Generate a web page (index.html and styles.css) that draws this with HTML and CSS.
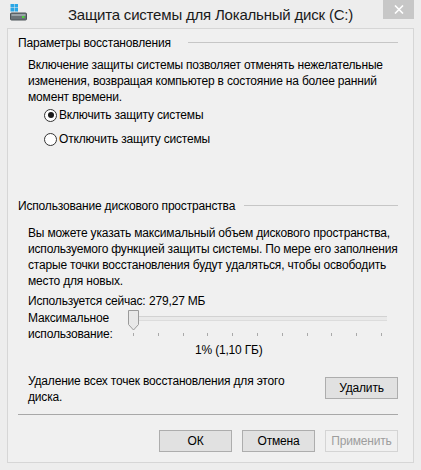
FILE: index.html
```html
<!DOCTYPE html>
<html lang="ru">
<head>
<meta charset="utf-8">
<link rel="stylesheet" href="styles.css">
</head>
<body>
<div class="window">
  <div class="titlebar">
    <div class="tb-left">
      <svg class="app-icon" width="17" height="17" viewBox="0 0 17 17">
        <rect x="0.5" y="0" width="3.5" height="3.5" fill="#2aa6e6"/>
        <rect x="4.5" y="0" width="3.5" height="3.5" fill="#2aa6e6"/>
        <rect x="0.5" y="4" width="3.5" height="3.5" fill="#2aa6e6"/>
        <rect x="4.5" y="4" width="3.5" height="3.5" fill="#2aa6e6"/>
        <rect x="0.5" y="9" width="16" height="7" rx="1" fill="#6a7378" stroke="#4c5458" stroke-width="1"/>
        <rect x="1.5" y="10" width="14" height="2" fill="#9aa3a8"/>
        <rect x="12" y="12" width="2.5" height="2" fill="#4cd23c"/>
      </svg>
    </div>
    <div class="title">Защита системы для Локальный диск (C:)</div>
    <div class="tb-right">
      <div class="close">
        <svg width="10" height="9" viewBox="0 0 10 9"><path d="M1 0.5 L9 8.5 M9 0.5 L1 8.5" stroke="#fff" stroke-width="1.6"/></svg>
      </div>
    </div>
  </div>

  <div class="client">
    <div class="group-head"><span>Параметры восстановления</span><i class="rule"></i></div>
    <p class="desc">Включение защиты системы позволяет отменять нежелательные<br>изменения, возвращая компьютер в состояние на более ранний<br>момент времени.</p>
    <div class="radio radio-first"><span class="circle checked"></span><span>Включить защиту системы</span></div>
    <div class="radio radio-second"><span class="circle"></span><span>Отключить защиту системы</span></div>

    <div class="group-head group-two"><span>Использование дискового пространства</span><i class="rule"></i></div>
    <p class="desc desc-two">Вы можете указать максимальный объем дискового пространства,<br>используемого функцией защиты системы. По мере его заполнения<br>старые точки восстановления будут удаляться, чтобы освободить<br>место для новых.</p>
    <div class="usage"><span class="usage-label">Используется сейчас:</span><span>279,27 МБ</span></div>

    <div class="max-row">
      <div class="max-label">Максимальное<br>использование:</div>
      <div class="slider">
        <div class="track"></div>
        <div class="ticks">
          <i></i><i></i><i></i><i></i><i></i><i></i><i></i><i></i><i></i><i></i><i></i>
        </div>
        <svg class="thumb" width="11" height="21" viewBox="0 0 11 21">
          <path d="M0.5 0.5 H10.5 V14.5 L5.5 20 L0.5 14.5 Z" fill="#e8e8e8" stroke="#9a9a9a" stroke-width="1"/>
        </svg>
      </div>
    </div>
    <div class="percent">1% (1,10 ГБ)</div>

    <div class="delete-row">
      <p class="delete-text">Удаление всех точек восстановления для этого<br>диска.</p>
      <button class="btn btn-delete">Удалить</button>
    </div>

    <div class="separator"></div>

    <div class="buttons">
      <button class="btn">ОК</button>
      <button class="btn">Отмена</button>
      <button class="btn disabled">Применить</button>
    </div>
  </div>
</div>
</body>
</html>
```

FILE: styles.css
```css
html, body {
  margin: 0;
  padding: 0;
}

body {
  background: #ededed;
  font-family: "Liberation Sans", Arial, sans-serif;
  font-size: 12px;
  letter-spacing: -0.18px;
  color: #000;
}

.window {
  width: 421px;
  height: 470px;
  box-sizing: border-box;
  background: #ededed;
  display: flex;
  flex-direction: column;
}

.titlebar {
  height: 28px;
  display: grid;
  grid-template-columns: 1fr auto 1fr;
  align-items: start;
}

.tb-left {
  padding: 4px 0 0 10px;
}

.app-icon {
  display: block;
}

.title {
  font-size: 15px;
  letter-spacing: -0.2px;
  line-height: 20px;
  padding-top: 5px;
  color: #1a1a1a;
  white-space: nowrap;
}

.tb-right {
  display: flex;
  justify-content: flex-end;
  padding-right: 7px;
}

.close {
  width: 31px;
  height: 19px;
  background: #c7c7c7;
  display: flex;
  align-items: center;
  justify-content: center;
}

.close svg {
  display: block;
}

.client {
  margin: 0 7px;
  height: 435px;
  box-sizing: border-box;
  border: 1px solid #d6d6d6;
  background: #f0f0f0;
  padding: 6px 15px 0 10px;
  display: flex;
  flex-direction: column;
}

.group-head {
  display: flex;
  align-items: center;
  height: 16px;
  line-height: 16px;
  white-space: nowrap;
}

.group-head .rule {
  flex: 1;
  height: 1px;
  background: #c6c6c6;
  margin-left: 17px;
  margin-top: -1px;
}

.group-two {
  margin-top: 51px;
}

.group-two .rule {
  margin-left: 9px;
}

.desc {
  margin: 6px 0 0 10px;
  line-height: 16px;
  white-space: nowrap;
}

.desc-two {
  margin-top: 11px;
}

.radio {
  display: flex;
  align-items: center;
  height: 16px;
  line-height: 16px;
  margin-left: 26px;
  gap: 2px;
  white-space: nowrap;
}

.radio-first {
  margin-top: 2px;
}

.radio-second {
  margin-top: 8px;
}

.circle {
  width: 11px;
  height: 11px;
  border: 1px solid #333;
  border-radius: 50%;
  background: #fff;
  position: relative;
  flex: none;
}

.circle.checked::after {
  content: "";
  position: absolute;
  left: 2.5px;
  top: 2.5px;
  width: 6px;
  height: 6px;
  border-radius: 50%;
  background: #1a1a1a;
}

.usage {
  margin: 4px 0 0 10px;
  line-height: 16px;
  display: flex;
  white-space: nowrap;
}

.usage-label {
  width: 121px;
  flex: none;
}

.max-row {
  margin: 1px 0 0 10px;
  display: flex;
  white-space: nowrap;
}

.max-label {
  width: 100px;
  flex: none;
  line-height: 16px;
}

.slider {
  position: relative;
  width: 264px;
  height: 32px;
}

.track {
  margin: 6px 0 0 5px;
  width: 254px;
  height: 3px;
  border-top: 1px solid #d2d2d2;
  border-bottom: 1px solid #dcdcdc;
  background: #e9e9e9;
}

.ticks {
  margin: 12px 0 0 5px;
  width: 249px;
  display: flex;
  justify-content: space-between;
}

.ticks i {
  display: block;
  width: 1px;
  height: 3px;
  background: #a9a9a9;
}

.thumb {
  position: absolute;
  left: 0;
  top: 0;
}

.percent {
  margin: 0 0 0 177px;
  line-height: 16px;
  white-space: nowrap;
}

.delete-row {
  margin: 15px 0 0 10px;
  display: flex;
  justify-content: space-between;
  align-items: flex-start;
}

.delete-text {
  margin: 0;
  line-height: 16px;
  white-space: nowrap;
}

.btn {
  font-family: inherit;
  font-size: 12px;
  letter-spacing: -0.18px;
  color: #000;
  background: #e1e1e1;
  border: 1px solid #adadad;
  border-radius: 0;
  height: 22px;
  width: 73px;
  padding: 0;
}

.btn-delete {
  margin-top: 4px;
}

.btn.disabled {
  color: #9d9d9d;
  background: #f0f0f0;
  border-color: #d4d4d4;
}

.separator {
  margin: 9px 0 0 0;
  height: 1px;
  background: #a8a8a8;
}

.buttons {
  margin-top: 15px;
  display: flex;
  justify-content: flex-end;
  gap: 10px;
}
```
